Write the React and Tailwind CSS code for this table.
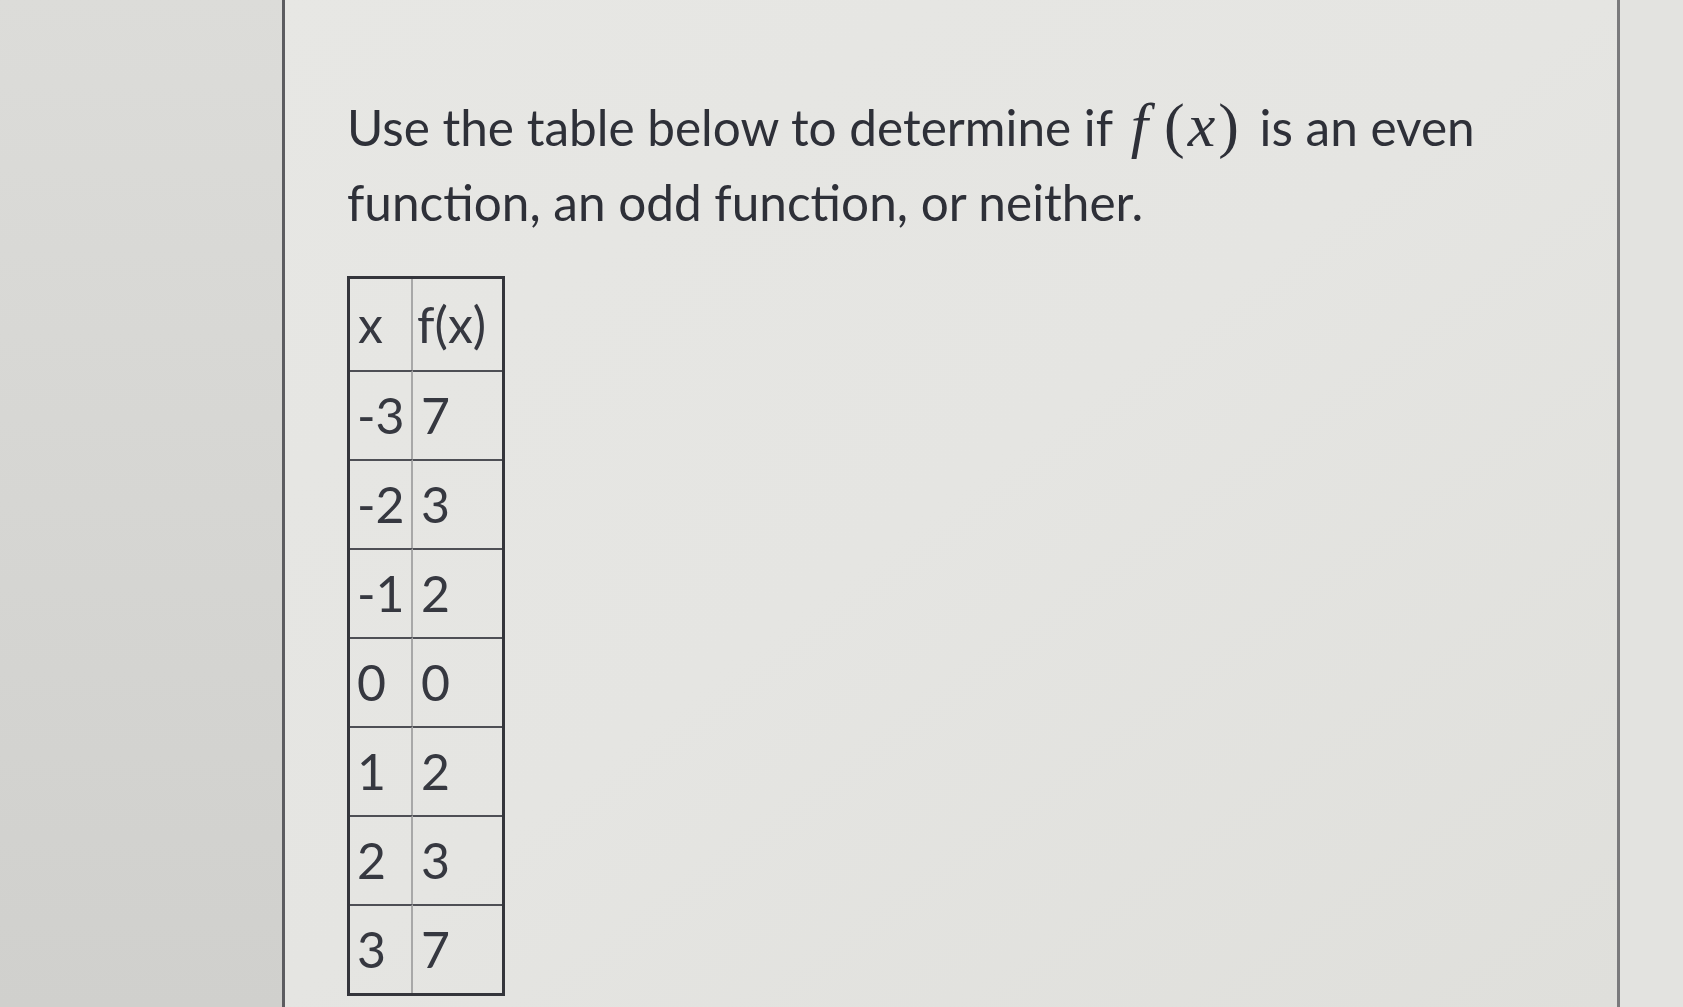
export default function App() {
  const rows = [
    ["-3", "7"],
    ["-2", "3"],
    ["-1", "2"],
    ["0", "0"],
    ["1", "2"],
    ["2", "3"],
    ["3", "7"],
  ];
  return (
    <div
      className="flex h-[1007px] w-[1683px] overflow-hidden text-[#2e3038]"
      style={{ fontFamily: "Lato, 'Open Sans', sans-serif" }}
    >
      <div className="w-[285px] shrink-0 bg-gradient-to-b from-[#dcdcd9] to-[#d0d0cd] border-r-[3px] border-[#5c5c60]" />
      <div className="flex-1 bg-gradient-to-br from-[#e7e7e4] via-[#e5e5e2] to-[#dfdfdb] pl-[62px] pt-[88px]">
        <p className="text-[49.5px] leading-[75px] whitespace-nowrap">
          Use the table below to determine if{" "}
          <span className="font-['Liberation_Serif',serif] text-[62px] ml-[6px] mr-[8px]">
            <i className="mr-[16px]">f</i>(<i className="mx-[3px]">x</i>)
          </span>{" "}
          is an even
          <br />
          function, an odd function, or neither.
        </p>
        <div className="mt-[36px] inline-grid grid-cols-[63px_89px] border-[3px] border-[#34353b] text-[50px] text-[#363840]">
          <div className="h-[91px] flex items-center pl-[8px] border-r-2 border-[#a8a8a8]">x</div>
          <div className="h-[91px] flex items-center pl-[4px]">f(x)</div>
          {rows.map(([a, b], i) => (
            <div key={i} className="contents">
              <div className="h-[89px] flex items-center pl-[7px] border-t-2 border-r-2 border-t-[#4e4f55] border-r-[#a8a8a8]">
                {a}
              </div>
              <div className="h-[89px] flex items-center pl-[8px] border-t-2 border-[#4e4f55]">
                {b}
              </div>
            </div>
          ))}
        </div>
      </div>
      <div className="w-[66px] shrink-0 bg-[#e3e3e0] border-l-[3px] border-[#7a7a7c]" />
    </div>
  );
}
